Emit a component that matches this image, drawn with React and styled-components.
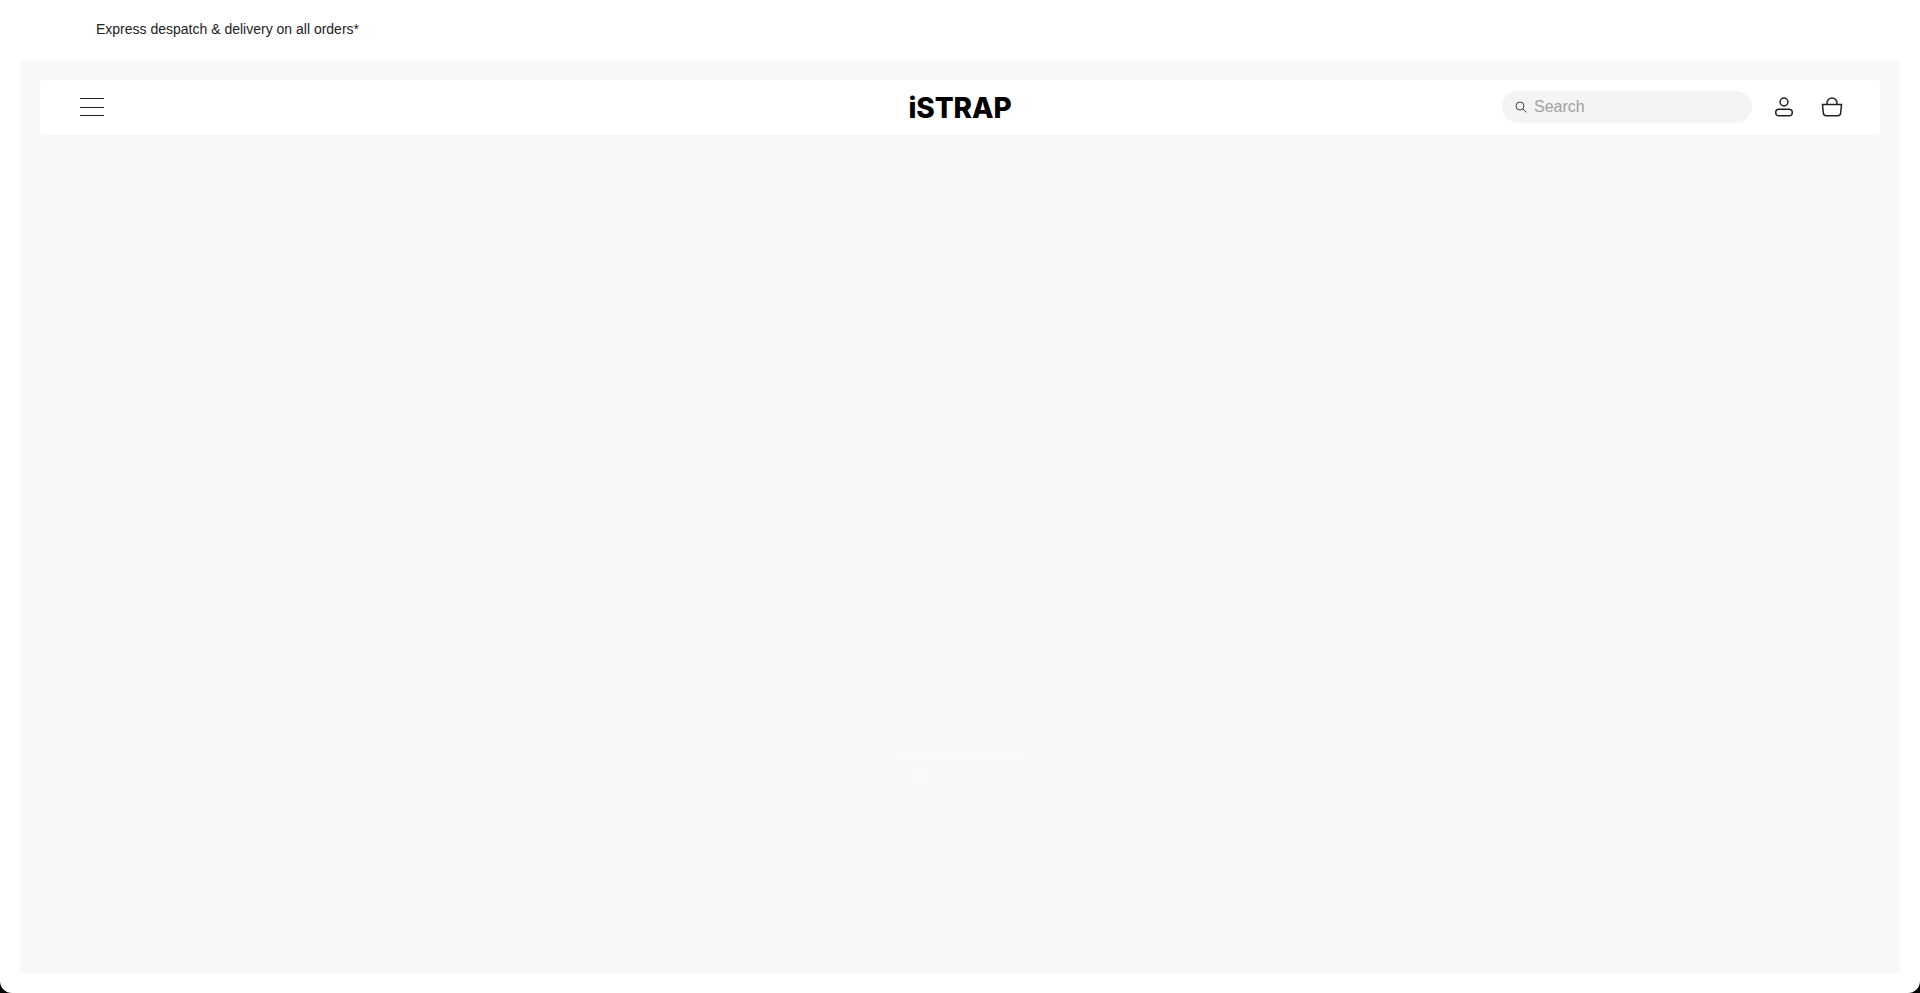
import React from "react";
import styled, { createGlobalStyle } from "styled-components";

const Global = createGlobalStyle`
  html, body { margin: 0; padding: 0; height: 100%; background: #000; }
  #root { height: 100%; }
  * { box-sizing: border-box; }
`;
const Page = styled.div`
  height: 993px; overflow: hidden; display: flex; flex-direction: column;
  background: #fff; border-radius: 0 0 12px 12px;
  font-family: "Liberation Sans", Arial, sans-serif; color: #111;
`;
const Announcement = styled.div`
  height: 60px; flex: none; padding: 0 0 2px 96px; display: flex; align-items: center;
  font-size: 14px; line-height: 16px; color: #222;
`;
const Panel = styled.main`
  width: 1880px; height: 913px; margin: 0 auto; padding: 20px;
  background: #f8f8f8; border-radius: 4px;
  display: flex; flex-direction: column; align-items: center;
`;
const Header = styled.header`
  align-self: stretch; height: 55px; flex: none; background: #fff; border-radius: 3px;
  display: grid; grid-template-columns: 1fr auto 1fr; align-items: center; padding: 0 37px;
`;
const MenuButton = styled.div`
  width: 24px; height: 18px; display: flex; flex-direction: column; justify-content: space-between;
  margin: -1px 0 0 3px;
`;
const MenuLine = styled.span`display: block; height: 1px; background: #222;`;
const Logo = styled.div`
  font-family: Inter, sans-serif; font-weight: 800; font-size: 28px; line-height: 30px;
  letter-spacing: -0.1px; color: #000;
`;
const Actions = styled.div`display: flex; align-items: center; justify-content: flex-end; margin-top: -1px;`;
const Search = styled.div`
  width: 250px; height: 32px; border-radius: 16px; background: #f4f4f4;
  display: flex; align-items: center; padding-left: 13px; gap: 7px; margin-right: 22px;
  font-size: 16px; color: #a0a0a0;
`;
const IconSlot = styled.div`display: flex; width: ${p => p.$w}px; margin-left: ${p => p.$ml || 0}px;`;
const Skeleton = styled.div`
  margin-top: 617px; width: 127px; display: flex; flex-direction: column; align-items: flex-end;
`;
const SkeletonTitle = styled.div`width: 127px; height: 7px; background: #f9f9f9;`;
const SkeletonRow = styled.div`display: flex; align-items: center; margin-top: 10px; width: 111px; justify-content: space-between;`;
const SkeletonThumb = styled.div`width: 16px; height: 14px; background: #f9f9f9;`;
const SkeletonBar = styled.div`width: 80px; height: 7px; background: #f9f9f9;`;

export default function App() {
  return (
    <>
      <Global />
      <Page>
        <Announcement>Express despatch &amp; delivery on all orders*</Announcement>
        <Panel>
          <Header>
            <MenuButton><MenuLine /><MenuLine /><MenuLine /></MenuButton>
            <Logo>iSTRAP</Logo>
            <Actions>
              <Search>
                <svg width="12" height="12" viewBox="0 0 12 12" fill="none" stroke="#444" strokeWidth="1">
                  <circle cx="5" cy="5" r="4" />
                  <path d="M8 8L11.500 11.500" />
                </svg>
                <span>Search</span>
              </Search>
              <IconSlot $w={20}>
                <svg width="20" height="20" viewBox="0 0 20 20" fill="none" stroke="#222" strokeWidth="1.500">
                  <circle cx="10" cy="5" r="3.900" />
                  <rect x="1.700" y="12.200" width="16.600" height="6.600" rx="3.300" />
                </svg>
              </IconSlot>
              <IconSlot $w={22} $ml={27}>
                <svg width="22" height="20" viewBox="0 0 22 20" fill="none" stroke="#222" strokeWidth="1.500">
                  <path d="M1.500 7.500h19l-.8 8.300a3 3 0 0 1-3 2.900H5.300a3 3 0 0 1-3-2.900z" />
                  <path d="M6 7.500V6a5 5 0 0 1 10 0v1.500" />
                </svg>
              </IconSlot>
            </Actions>
          </Header>
          <Skeleton>
            <SkeletonTitle />
            <SkeletonRow><SkeletonThumb /><SkeletonBar /></SkeletonRow>
          </Skeleton>
        </Panel>
      </Page>
    </>
  );
}
